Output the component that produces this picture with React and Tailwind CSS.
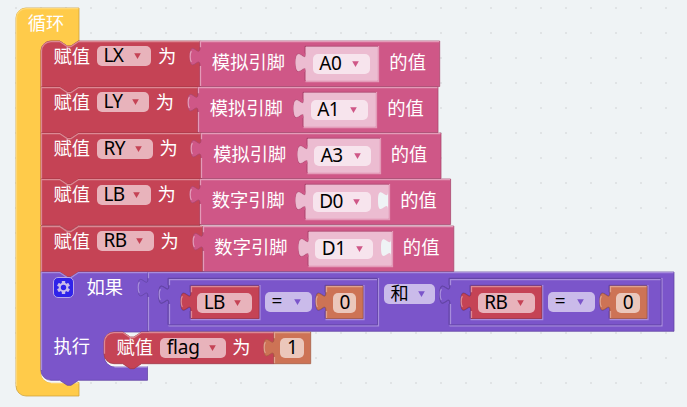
import React from "react";

const RED = { fill: "#c54355", light: "#dc8893", dark: "#9e3644" };
const PINK = { fill: "#cf5787", light: "#e39bb8", dark: "#a6466c" };
const PALE = { fill: "#ecbcd1", light: "#ecbcd1", dark: "#ecbcd1" };
const PURPLE = { fill: "#7b55ca", light: "#a78ddc", dark: "#6244a2" };
const ORANGE = { fill: "#cd7355", light: "#dfa28e", dark: "#a45c44" };
const YELLOW = { fill: "#ffcb4a", light: "#ffd875", dark: "#cca23b" };

const NOTCH = "l 7.5 5 h 3.75 l 7.5 -5";
const NOTCH_BACK = "l -7.5 5 h -3.75 l -7.5 -5";
const TAB = "V 25 c 0 -12.5 -10 10 -10 -9.375 s 10 3.125 10 -9.375";
const TAB_DOWN = "M 0 6.25 c 0 12.5 -10 -10 -10 9.375 s 10 -3.125 10 9.375";

function Shape({ outline, light, tone, hole, w, h }) {
  return (
    <svg className="pointer-events-none absolute left-0 top-0 overflow-visible" width={w} height={h} fill="none">
      {hole && (
        <>
          <path d={`M ${w + 1} -1 V ${h + 1} H -0.5`} stroke={hole.light} strokeWidth="1.25" />
          <path d={`M -1 ${h} V 25 M -1 6.25 V -0.7 H ${w}`} stroke={hole.dark} strokeWidth="1" />
          <path d={TAB_DOWN} stroke={hole.dark} strokeWidth="1.6" />
        </>
      )}
      <path d={outline} fill={tone.fill} stroke={tone.dark} strokeWidth="1" strokeOpacity="0.75" />
      <path d={light} stroke={tone.light} strokeWidth="1.25" />
    </svg>
  );
}

function Value({ w, h, tone, hole, className = "", children }) {
  return (
    <div className={`relative flex shrink-0 items-start ${className}`} style={{ width: w, height: h }}>
      <Shape
        w={w}
        h={h}
        tone={tone}
        hole={hole}
        outline={`M 0 0 H ${w} V ${h} H 0 ${TAB} Z`}
        light={`M ${w - 0.5} 0.5 H 0.5 V 6.25 M 0.5 25 V ${h - 0.5} M -8.6 21 C -10.2 19 -10.2 12 -8.6 10`}
      />
      {children}
    </div>
  );
}

function Statement({ w, h, first, last, tone = RED, className = "", children }) {
  const top = first ? "M 0 10 a 10 10 0 0 1 10 -10 H 18.75" : "M 0 0 H 18.75";
  const bottom = last ? `H 10 a 10 10 0 0 1 -10 -10 Z` : "H 0 Z";
  return (
    <div className={`relative flex shrink-0 items-start ${className}`} style={{ width: w, height: h }}>
      <Shape
        w={w}
        h={h}
        tone={tone}
        outline={`${top} ${NOTCH} H ${w} V ${h} H 37.5 ${NOTCH_BACK} ${bottom}`}
        light={
          first
            ? `M 0.5 ${h - (last ? 10 : 0)} V 10 a 9.5 9.5 0 0 1 9.5 -9.5 H 18.75 ${NOTCH} H ${w}`
            : `M 0.5 ${h} V 0.5 H 18.75 ${NOTCH} H ${w}`
        }
      />
      {children}
    </div>
  );
}

function Label({ className = "", children }) {
  return (
    <span className={`relative block shrink-0 whitespace-nowrap text-[18.3px] leading-[20px] text-white ${className}`}>
      {children}
    </span>
  );
}

function Field({ w, arrow, className = "", cjk, children }) {
  return (
    <span
      className={`relative flex h-5 shrink-0 items-center whitespace-nowrap rounded-[5px] bg-white/60 leading-[20px] text-black ${cjk ? "text-[18.3px]" : "text-[19px] tracking-[-0.6px]"} ${arrow ? "justify-between pl-[6.5px] pr-[10.5px]" : "justify-center"} ${className}`}
      style={{ width: w }}
    >
      <span className="-mt-[2px] block">{children}</span>
      {arrow && (
        <svg width="7" height="6" className="block shrink-0">
          <path d="M 0.2 0.2 H 6.8 L 3.5 6 Z" fill={arrow} />
        </svg>
      )}
    </span>
  );
}

function PinRead({ digital, pin, w, fieldW, gap }) {
  return (
    <Value w={w} h={45.5} tone={PINK}>
      <Label className="ml-[11.7px] mt-[11px] w-[94.5px]">{digital ? "数字引脚" : "模拟引脚"}</Label>
      <Value w={digital ? 82.5 : 71.5} h={33.5} tone={PALE} hole={PINK} className="mt-[6px]">
        <Field w={fieldW} arrow={PINK.fill} className="ml-[6.5px] mt-[7px]">{pin}</Field>
        {digital && (
          <svg className="relative ml-[6.5px] mt-[5px] block overflow-visible" width="11" height="22">
            <path d="M 11 1.25 c 0 12.5 -10 -10 -10 9.375 s 10 -3.125 10 9.375 Z" fill="#eff3f5" />
          </svg>
        )}
      </Value>
      <Label className={`mt-[11px] ${gap}`}>的值</Label>
    </Value>
  );
}

const ROWS = [
  { name: "LX", left: 159.2, nameW: 54.5, pin: "A0", w: 239.7, fieldW: 57 },
  { name: "LY", left: 157, nameW: 52.2, pin: "A1", w: 240, fieldW: 57 },
  { name: "RY", left: 160.5, nameW: 56, pin: "A3", w: 240, fieldW: 57 },
  { name: "LB", left: 159, nameW: 54, pin: "D0", w: 250.6, fieldW: 58, digital: true },
  { name: "RB", left: 161.7, nameW: 57, pin: "D1", w: 250.8, fieldW: 58, digital: true },
];

function AssignRow({ row, first }) {
  return (
    <div className="flex h-[46.25px]">
      <Statement w={row.left} h={46.25} first={first}>
        <Label className="ml-[12.4px] mt-[5px] w-[43.6px]">赋值</Label>
        <Field w={row.nameW} arrow={RED.fill} className="mt-[5.5px]">{row.name}</Field>
        <Label className="ml-[6.5px] mt-[5px]">为</Label>
      </Statement>
      <PinRead {...row} gap="ml-[11.5px]" />
    </div>
  );
}

function Gear() {
  return (
    <span className="relative ml-[12.5px] mt-[5.5px] flex h-[21px] w-[21px] shrink-0 items-center justify-center rounded-[5px] border border-[#b9a7e8] bg-[#2f23ea]">
      <svg width="15" height="15" viewBox="-7.5 -7.5 15 15" className="shrink-0">
        <g fill="#c9bcea">
          {[0, 60, 120].map((a) => (
            <rect key={a} x="-1.7" y="-6.5" width="3.4" height="13" rx="0.5" transform={`rotate(${a})`} />
          ))}
          <circle r="4.7" />
        </g>
        <circle r="2.7" fill="#2f23ea" />
      </svg>
    </span>
  );
}

function Compare({ w, name, redW, nameW, className }) {
  return (
    <Value w={w} h={45.8} tone={PURPLE} hole={PURPLE} className={`mt-[7.5px] ${className}`}>
      <Value w={redW} h={32.5} tone={RED} hole={PURPLE} className="ml-[21.2px] mt-[7.2px]">
        <Field w={nameW} arrow={RED.fill} className="ml-[6.5px] mt-[6.5px]">{name}</Field>
      </Value>
      <Field w={46.7} arrow={PURPLE.fill} className="ml-[6.3px] mt-[12.3px]">=</Field>
      <Value w={37} h={32.5} tone={ORANGE} hole={PURPLE} className="ml-[14.8px] mt-[7.2px]">
        <Field w={23.5} className="ml-[6.5px] mt-[6.5px]">0</Field>
      </Value>
    </Value>
  );
}

function IfBlock() {
  const outline = `M 0 0 H 18.75 ${NOTCH} H 107 V 60 H 73.5 a 10 10 0 0 0 -10 10 V 84.5 a 10 10 0 0 0 10 10 H 106.5 V 108.3 H 37.5 ${NOTCH_BACK} H 10 a 10 10 0 0 1 -10 -10 Z`;
  const light = `M 0.5 98 V 0.5 H 18.75 ${NOTCH} H 107 M 73.5 95.2 H 106.5`;
  return (
    <div className="relative h-[108.3px]">
      <svg className="pointer-events-none absolute left-0 top-0 overflow-visible" width="107" height="108">
        <path d="M 0 96 V 100.8 a 10 10 0 0 0 10 10 H 37 L 30 108 H 12 Z" fill="#f7f9fa" />
      </svg>
      <Shape w={107} h={108.3} tone={PURPLE} outline={outline} light={light} />
      <svg className="pointer-events-none absolute left-0 top-0 overflow-visible" width="107" height="108">
        <path d="M 63.7 80 V 84.5 a 10 10 0 0 0 10 10 H 106.5 V 90 H 72 Z" fill="#f7f9fa" />
      </svg>
      <div className="flex h-[59.8px] items-start">
        <Gear />
        <Label className="ml-[12px] mt-[5px] w-[61.8px]">如果</Label>
        <Value w={526} h={59.3} tone={PURPLE}>
          <Compare w={208.5} name="LB" redW={68} nameW={54.5} className="ml-[21.2px]" />
          <Field cjk w={51.5} arrow={PURPLE.fill} className="ml-[6px] mt-[12px]">和</Field>
          <Compare w={211} name="RB" redW={70.7} nameW={57} className="ml-[14.6px]" />
        </Value>
      </div>
      <div className="flex items-start">
        <Label className="ml-[12.5px] mt-[4px] w-[51px]">执行</Label>
        <Statement w={170} h={31.7} first last>
          <Label className="ml-[12px] mt-[5px] w-[43.7px]">赋值</Label>
          <Field w={66} arrow={RED.fill} className="mt-[6.2px]"><span className="tracking-[-0.2px]">flag</span></Field>
          <Label className="ml-[6px] mt-[5px]">为</Label>
        </Statement>
        <Value w={36.7} h={31.7} tone={ORANGE}>
          <Field w={23.5} className="ml-[6px] mt-[6.2px]">1</Field>
        </Value>
      </div>
    </div>
  );
}

function LoopBlock() {
  const outline = `M 0 10 a 10 10 0 0 1 10 -10 H 63 V 33 H 62.5 ${NOTCH_BACK} H 35 a 10 10 0 0 0 -10 10 V 364.5 a 10 10 0 0 0 10 10 H 63 V 388 H 10 a 10 10 0 0 1 -10 -10 Z`;
  const light = "M 0.5 378 V 10 a 9.5 9.5 0 0 1 9.5 -9.5 H 62.5 M 35 375.1 H 62.5";
  return (
    <div className="relative h-[388px] w-[663px]">
      <Shape w={63} h={388} tone={YELLOW} outline={outline} light={light} />
      <div className="h-[32.5px] pl-[12px] pt-[4.5px]">
        <Label>循环</Label>
      </div>
      <div className="flex flex-col pl-[25.2px]">
        {ROWS.map((row, i) => (
          <AssignRow key={row.name} row={row} first={i === 0} />
        ))}
        <IfBlock />
      </div>
    </div>
  );
}

export default function App() {
  return (
    <main className="relative h-[407px] w-[687px] overflow-hidden bg-[#eff3f5] pl-[15.8px] pt-[8px] font-['Noto_Sans','Noto_Sans_CJK_SC',sans-serif]">
      <svg className="absolute inset-0" width="687" height="407">
        <defs>
          <pattern id="grid" width="25" height="25" patternUnits="userSpaceOnUse">
            <rect x="15" y="7" width="2" height="2" fill="#e0e3e5" />
          </pattern>
        </defs>
        <rect width="687" height="407" fill="url(#grid)" />
      </svg>
      <LoopBlock />
    </main>
  );
}
